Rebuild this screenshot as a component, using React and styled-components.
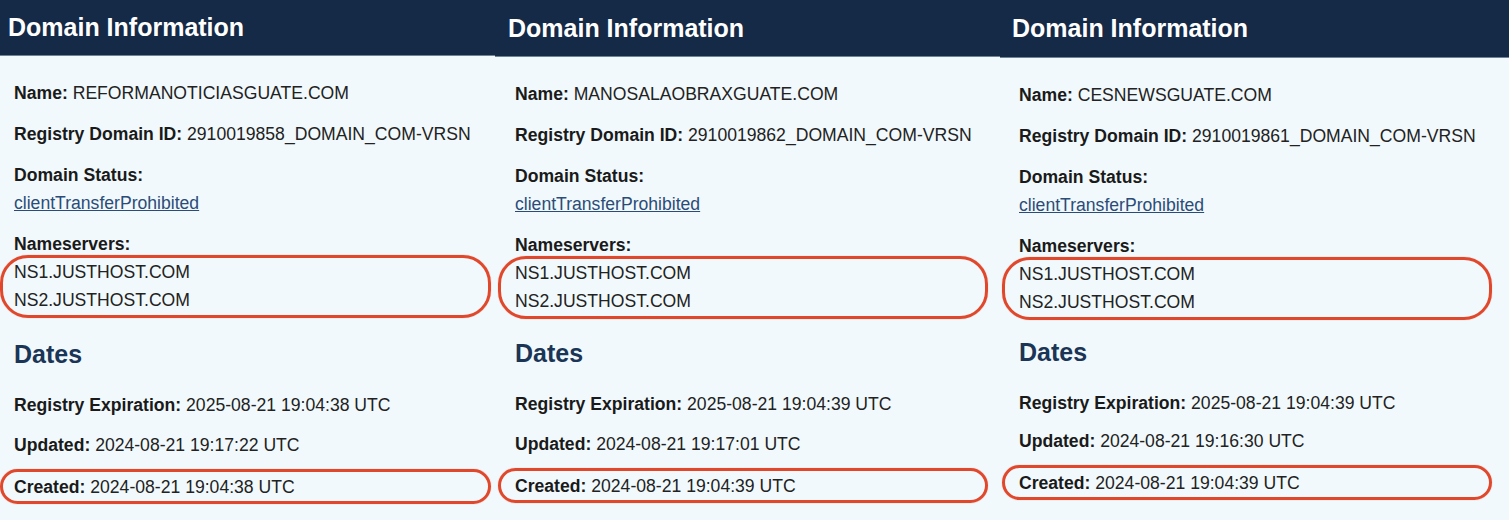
import React from 'react'
import styled, { createGlobalStyle } from 'styled-components'

const domains = [
    {
        name: 'REFORMANOTICIASGUATE.COM',
        id: '2910019858_DOMAIN_COM-VRSN',
        expires: '2025-08-21 19:04:38 UTC',
        updated: '2024-08-21 19:17:22 UTC',
        created: '2024-08-21 19:04:38 UTC',
        head: 57, titleX: 8, textX: 14, ovalL: 0, ovalR: 4, datesTop: 21, dateGap: 12
    },
    {
        name: 'MANOSALAOBRAXGUATE.COM',
        id: '2910019862_DOMAIN_COM-VRSN',
        expires: '2025-08-21 19:04:39 UTC',
        updated: '2024-08-21 19:17:01 UTC',
        created: '2024-08-21 19:04:39 UTC',
        head: 58, titleX: 13, textX: 20, ovalL: 3, ovalR: 12, datesTop: 19, dateGap: 12
    },
    {
        name: 'CESNEWSGUATE.COM',
        id: '2910019861_DOMAIN_COM-VRSN',
        expires: '2025-08-21 19:04:39 UTC',
        updated: '2024-08-21 19:16:30 UTC',
        created: '2024-08-21 19:04:39 UTC',
        head: 59, titleX: 12, textX: 19, ovalL: 2, ovalR: 17, datesTop: 17, dateGap: 10
    }
]

function DomainPanel({ d }) {
    return (
        <Panel>
            <Header $h={d.head} $x={d.titleX}>Domain Information</Header>
            <Body $x={d.textX}>
                <Field>
                    <Label>Name:</Label> {d.name}
                </Field>
                <Field>
                    <Label>Registry Domain ID:</Label> {d.id}
                </Field>
                <Field>
                    <Label>Domain Status:</Label>
                    <br />
                    <StatusLink href="#">clientTransferProhibited</StatusLink>
                </Field>
                <Field $gap={0}>
                    <Label>Nameservers:</Label>
                </Field>
                <Oval $x={d.textX} $l={d.ovalL} $r={d.ovalR}>
                    <Line>NS1.JUSTHOST.COM</Line>
                    <Line>NS2.JUSTHOST.COM</Line>
                </Oval>
                <SectionTitle $top={d.datesTop}>Dates</SectionTitle>
                <Field $gap={d.dateGap}>
                    <Label>Registry Expiration:</Label> {d.expires}
                </Field>
                <Field $gap={0}>
                    <Label>Updated:</Label> {d.updated}
                </Field>
                <Oval $x={d.textX} $l={d.ovalL} $r={d.ovalR} $single>
                    <Line>
                        <Label>Created:</Label> {d.created}
                    </Line>
                </Oval>
            </Body>
        </Panel>
    )
}

export default function App() {
    return (
        <>
            <GlobalStyle />
            <Row>
                {domains.map((d) => (
                    <DomainPanel key={d.name} d={d} />
                ))}
            </Row>
        </>
    )
}

const GlobalStyle = createGlobalStyle`
    html, body {
        margin: 0;
        padding: 0;
        background: #f1f9fc;
        font-family: "Liberation Sans", Arial, sans-serif;
        -webkit-font-smoothing: antialiased;
    }
`

const Row = styled.div`
    display: grid;
    grid-template-columns: 495px 505px 509px;
    width: 1509px;
    height: 520px;
    overflow: hidden;
`

const Panel = styled.section`
    display: flex;
    flex-direction: column;
    background: #f1f9fc;
    min-width: 0;
`

const Header = styled.div`
    height: ${(p) => p.$h - 1}px;
    display: flex;
    align-items: center;
    padding: 0 0 0 ${(p) => p.$x}px;
    box-sizing: border-box;
    background: #152a47;
    border-bottom: 1px solid #6f8296;
    color: #ffffff;
    font-size: 25px;
    font-weight: 700;
`

const Body = styled.div`
    padding: 23px 0 0 ${(p) => p.$x}px;
    font-size: 17.6px;
    line-height: 28px;
    color: #222222;
`

const Field = styled.div`
    margin-bottom: ${(p) => (p.$gap ?? 13)}px;
    white-space: nowrap;
`

const Label = styled.b`
    font-weight: 700;
    color: #1a1a1a;
`

const StatusLink = styled.a`
    color: #2b4c78;
    text-decoration: underline;
`

const Oval = styled.div`
    margin: ${(p) => (p.$single ? '10px' : '-3px')} ${(p) => p.$r}px 0 ${(p) => p.$l - p.$x}px;
    padding: ${(p) => (p.$single ? '1px 0 0' : '0 0 1px')} ${(p) => p.$x - p.$l - 3}px;
    border: 3px solid #e0472b;
    border-radius: ${(p) => (p.$single ? 18 : 28)}px;
    box-shadow: 0 0 1px rgba(224, 71, 43, 0.6);
`

const Line = styled.div`
    white-space: nowrap;
`

const SectionTitle = styled.h2`
    margin: ${(p) => p.$top}px 0 22px;
    font-size: 25px;
    line-height: 30px;
    font-weight: 700;
    color: #1b3556;
`
